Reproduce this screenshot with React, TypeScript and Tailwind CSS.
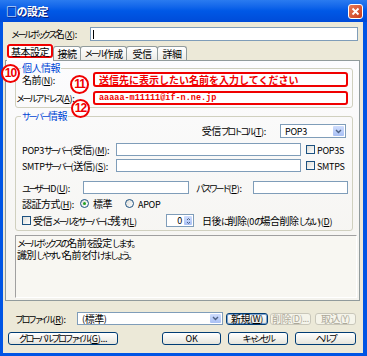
import type { ReactNode } from "react";

// XP-style dialog (Luna theme), scaled-down screenshot
const font = "font-['Noto_Sans_CJK_JP',sans-serif] whitespace-nowrap leading-[11px]";

// MS UI Gothic has narrow kana; squeeze kana runs, keep kanji wide.
const SMALL = "ぁぃぅぇぉっゃゅょァィゥェォッャュョ。、";

function charClass(c: string) {
  if (SMALL.includes(c)) return "text-[9px] tracking-[-4px]";
  if (/[\u3040-\u30ff]/.test(c)) return "text-[9px] tracking-[-2.5px]";
  if (/[\u4e00-\u9fff]/.test(c)) return "text-[10px] tracking-[-0.5px]";
  return "text-[9px] tracking-[-0.3px]";
}

// "_" marks the next char as the underlined access key
function Jp({ t }: { t: string }) {
  const out: ReactNode[] = [];
  let under = false;
  Array.from(t).forEach((c, i) => {
    if (c === "_") {
      under = true;
      return;
    }
    out.push(
      <span key={i} className={`${charClass(c)} ${under ? "underline underline-offset-[1px]" : ""}`}>
        {c}
      </span>
    );
    under = false;
  });
  return <>{out}</>;
}

function Input({ className = "" }: { className?: string }) {
  return <div className={`h-[13px] shrink-0 border border-[#7F9DB9] bg-white ${className}`} />;
}

function Arrow() {
  return (
    <div className="flex h-full w-[11px] items-center justify-center rounded-[1px] bg-gradient-to-b from-[#CFDDFD] to-[#A9C0F4]">
      <svg width="7" height="5" viewBox="0 0 7 5">
        <path d="M1 1 L3.5 3.5 L6 1" stroke="#4D6185" strokeWidth="1.4" fill="none" />
      </svg>
    </div>
  );
}

function Select({ value, className = "" }: { value: string; className?: string }) {
  return (
    <div className={`flex shrink-0 items-stretch border border-[#7F9DB9] bg-white p-[1px] ${className}`}>
      <span className="flex flex-1 items-center pl-[3px]">
        <Jp t={value} />
      </span>
      <Arrow />
    </div>
  );
}

function Check() {
  return <div className="h-[9px] w-[9px] shrink-0 border border-[#1C5180] bg-gradient-to-br from-[#DCDCD7] to-white" />;
}

function Radio({ checked }: { checked?: boolean }) {
  return (
    <div className="flex h-[9px] w-[9px] shrink-0 items-center justify-center rounded-full border border-[#1C5180] bg-gradient-to-br from-[#DCDCD7] to-white">
      {checked && <div className="h-[3px] w-[3px] rounded-full bg-[#21A121]" />}
    </div>
  );
}

function Button({
  t,
  disabled,
  focused,
  className = "",
}: {
  t: string;
  disabled?: boolean;
  focused?: boolean;
  className?: string;
}) {
  const tone = disabled
    ? "border-[#C9C7BA] bg-[#F5F4EA] text-[#ACA899]"
    : "border-[#003C74] bg-gradient-to-b from-white to-[#E6E5DC] text-black";
  return (
    <div
      className={`flex shrink-0 items-center justify-center rounded-[3px] border leading-none ${tone} ${
        focused ? "shadow-[inset_0_0_0_1px_#7DA2CE]" : ""
      } ${className}`}
    >
      <Jp t={t} />
    </div>
  );
}

function Circled({ n, className }: { n: string; className: string }) {
  return (
    <div
      className={`absolute z-20 flex h-[19px] w-[19px] items-center justify-center rounded-full border-2 border-[#F00000] bg-white font-['Liberation_Sans',sans-serif] text-[12px] font-bold tracking-[-1px] text-[#F00000] ${className}`}
    >
      {n}
    </div>
  );
}

function Tab({ t, className = "" }: { t: string; className?: string }) {
  return (
    <div
      className={`flex h-[14px] shrink-0 items-center justify-center rounded-t-[3px] border border-b-0 border-[#919B9C] bg-gradient-to-b from-white to-[#ECEBE6] ${className}`}
    >
      <Jp t={t} />
    </div>
  );
}

export default function App() {
  return (
    <div className={`relative flex h-[356px] w-[367px] flex-col overflow-hidden bg-[#0055E5] text-black ${font}`}>
      {/* title bar */}
      <div className="flex h-[22px] shrink-0 items-center justify-between bg-gradient-to-b from-[#2A7BF0] via-[#0058E6] to-[#004BD8] pl-[6px] pr-[4px]">
        <span className="text-[11px] font-bold tracking-[-0.5px] text-white [text-shadow:1px_1px_0_#0A1E7A]">□の設定</span>
        <div className="flex h-[15px] w-[15px] items-center justify-center rounded-[3px] border border-white bg-gradient-to-br from-[#E97A55] to-[#C8391A]">
          <svg width="9" height="9" viewBox="0 0 9 9">
            <path d="M1.5 1.5 L7.5 7.5 M7.5 1.5 L1.5 7.5" stroke="white" strokeWidth="1.8" />
          </svg>
        </div>
      </div>

      {/* body */}
      <div className="ml-[3px] mr-[4px] mb-[3px] flex flex-1 flex-col bg-[#ECE9D8] text-[10px]">
        <div className="mt-[5px] flex h-[14px] items-center">
          <span className="ml-[8px] w-[79px] shrink-0">
            <Jp t="メールボックス名(_X):" />
          </span>
          <div className="flex h-[14px] w-[268px] shrink-0 items-center border border-[#7F9DB9] bg-white pl-[2px]">
            <div className="h-[9px] w-[1px] bg-black" />
          </div>
        </div>

        {/* tabs */}
        <div className="relative z-10 mt-[3px] ml-[4px] flex h-[16px] items-end">
          <div className="-mb-[1px] flex h-[17px] w-[46px] shrink-0 flex-col bg-white">
            <div className="flex h-[14px] items-center justify-center rounded-[3px] border-2 border-[#F00000]">
              <Jp t="基本設定" />
            </div>
          </div>
          <Tab t="接続" className="w-[28px]" />
          <Tab t="メール作成" className="-ml-[1px] w-[47px]" />
          <Tab t="受信" className="-ml-[1px] w-[32px]" />
          <Tab t="詳細" className="-ml-[1px] w-[30px]" />
        </div>

        {/* tab page */}
        <div className="ml-[2px] flex h-[241px] w-[355px] flex-col border border-[#919B9C] bg-gradient-to-b from-[#FCFCFE] to-[#F4F3EE] pl-[9px]">
          <fieldset className="mt-[2px] w-[338px] rounded-[3px] border border-[#D0D0BF] pb-[2px] pr-[4px]">
            <legend className="ml-[5px] px-[1px] leading-[10px] text-[#0046D5]">
              <Jp t="個人情報" />
            </legend>
            <div className="-mt-[1px] flex items-center">
              <span className="ml-[6px] w-[71px] shrink-0">
                <Jp t="名前(_N):" />
              </span>
              <div className="flex h-[15px] flex-1 items-center rounded-[3px] border-2 border-[#F00000] bg-white pl-[4px] font-bold text-[#F00000]">
                送信先に表示したい名前を入力してください
              </div>
            </div>
            <div className="mt-[4px] flex items-center">
              <span className="w-[77px] shrink-0">
                <Jp t="メールアドレス(_A):" />
              </span>
              <div className="flex h-[14px] flex-1 items-center rounded-[3px] border-2 border-[#F00000] bg-white pl-[4px] font-['Liberation_Mono',monospace] text-[8.5px] font-bold text-[#F00000]">
                aaaaa-m11111@if-n.ne.jp
              </div>
            </div>
          </fieldset>

          <fieldset className="mt-[3px] w-[338px] rounded-[3px] border border-[#D0D0BF] pb-[3px] pl-[6px] pr-[4px]">
            <legend className="ml-[-1px] px-[1px] leading-[10px] text-[#0046D5]">
              <Jp t="サーバー情報" />
            </legend>
            <div className="mt-[2px] flex items-center justify-end">
              <span>
                <Jp t="受信プロトコル(_T):" />
              </span>
              <Select value="POP3" className="ml-[14px] mr-[2px] h-[14px] w-[66px]" />
            </div>
            <div className="mt-[5px] flex items-center">
              <span className="w-[94px] shrink-0">
                <Jp t="POP3サーバー(受信)(_M):" />
              </span>
              <Input className="w-[185px]" />
              <div className="ml-[5px] flex items-center gap-[2px]">
                <Check />
                <span>
                  <Jp t="POP3S" />
                </span>
              </div>
            </div>
            <div className="mt-[3px] flex items-center">
              <span className="w-[94px] shrink-0">
                <Jp t="SMTPサーバー(送信)(_S):" />
              </span>
              <Input className="w-[185px]" />
              <div className="ml-[5px] flex items-center gap-[2px]">
                <Check />
                <span>
                  <Jp t="SMTPS" />
                </span>
              </div>
            </div>
            <div className="mt-[9px] flex items-center">
              <span className="w-[61px] shrink-0">
                <Jp t="ユーザーID(_U):" />
              </span>
              <Input className="w-[106px]" />
              <span className="ml-[7px] w-[57px] shrink-0">
                <Jp t="パスワード(_P):" />
              </span>
              <Input className="w-[95px]" />
            </div>
            <div className="mt-[4px] flex h-[11px] items-center">
              <span className="w-[58px] shrink-0">
                <Jp t="認証方式(_H):" />
              </span>
              <Radio checked />
              <span className="ml-[4px] w-[32px] shrink-0">
                <Jp t="標準" />
              </span>
              <Radio />
              <span className="ml-[4px]">
                <Jp t="APOP" />
              </span>
            </div>
            <div className="mt-[5px] flex items-center">
              <Check />
              <span className="ml-[2px] w-[133px] shrink-0">
                <Jp t="受信メールをサーバーに残す(_L)" />
              </span>
              <div className="flex h-[13px] w-[28px] shrink-0 items-stretch border border-[#7F9DB9] bg-white p-[1px]">
                <span className="flex flex-1 items-center justify-end pr-[2px]">
                  <Jp t="0" />
                </span>
                <div className="flex w-[8px] flex-col items-center justify-center rounded-[1px] bg-gradient-to-b from-[#CFDDFD] to-[#A9C0F4]">
                  <svg width="5" height="8" viewBox="0 0 5 8">
                    <path d="M1 3 L2.5 1.5 L4 3 M1 5 L2.5 6.5 L4 5" stroke="#4D6185" strokeWidth="1" fill="none" />
                  </svg>
                </div>
              </div>
              <span className="ml-[8px]">
                <Jp t="日後に削除(0の場合削除しない)(_D)" />
              </span>
            </div>
          </fieldset>

          <div className="mt-[4px] h-[63px] w-[342px] border border-[#A0A0A0] border-b-white border-r-white bg-[#F8F7F2] pl-[1px] pt-[1px]">
            <p>
              <Jp t="メールボックスの名前を設定します。" />
            </p>
            <p>
              <Jp t="識別しやすい名前を付けましょう。" />
            </p>
          </div>
        </div>

        {/* profile row */}
        <div className="mt-[11px] flex items-center">
          <span className="ml-[12px] w-[62px] shrink-0">
            <Jp t="プロファイル(_R):" />
          </span>
          <Select value="(標準)" className="h-[13px] w-[146px]" />
          <Button t="新規(_W)" focused className="ml-[3px] h-[12px] w-[42px]" />
          <Button t="削除(_D)..." disabled className="ml-[2px] h-[12px] w-[41px]" />
          <Button t="取込(_Y)" disabled className="ml-[4px] h-[12px] w-[41px]" />
        </div>

        {/* buttons */}
        <div className="mt-[7px] flex items-center">
          <Button t="グローバルプロファイル(_G)..." className="ml-[5px] h-[13px] w-[110px]" />
          <Button t="OK" className="ml-[44px] h-[13px] w-[59px]" />
          <Button t="キャンセル" className="ml-[7px] h-[13px] w-[60px]" />
          <Button t="ヘルプ" className="ml-[7px] h-[13px] w-[61px]" />
        </div>
      </div>

      <Circled n="10" className="left-[1px] top-[64px]" />
      <Circled n="11" className="left-[70px] top-[75px]" />
      <Circled n="12" className="left-[71px] top-[99px]" />
    </div>
  );
}
